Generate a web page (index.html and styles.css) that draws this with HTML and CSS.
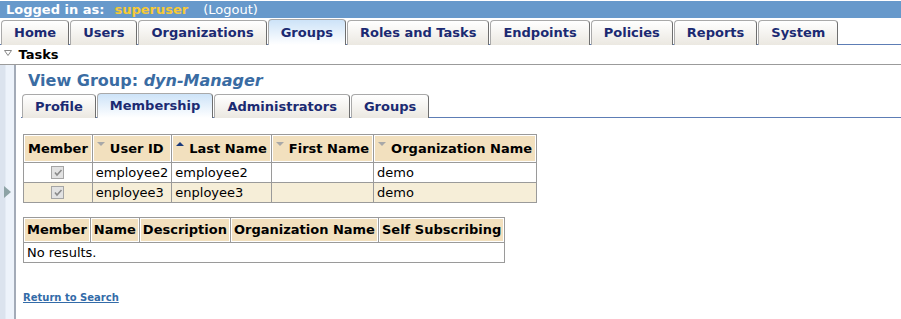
FILE: index.html
```html
<!DOCTYPE html>
<html lang="en">
<head>
    <meta charset="UTF-8">
    <title>View Group: dyn-Manager</title>
    <link rel="stylesheet" href="styles.css">
</head>
<body>

    <div class="topbar">
        <b>Logged in as:</b><span class="user">superuser</span><span class="logout">(Logout)</span>
    </div>

    <ul class="navtabs">
        <li>Home</li>
        <li>Users</li>
        <li>Organizations</li>
        <li class="active">Groups</li>
        <li>Roles and Tasks</li>
        <li>Endpoints</li>
        <li>Policies</li>
        <li>Reports</li>
        <li>System</li>
    </ul>

    <div class="tasks">
        <svg class="tasks-tri" width="8" height="6" viewBox="0 0 8 6"><path d="M0.5 0.5 H7.5 L4 5.5 Z" fill="#fff" stroke="#888"/></svg>
        Tasks
    </div>

    <div class="main">
        <div class="sidebar">
            <svg width="7" height="12" viewBox="0 0 7 12"><path d="M0 0 L7 6 L0 12 Z" fill="#8da3a6"/></svg>
        </div>

        <div class="content">
            <h2 class="title">View Group: <em>dyn-Manager</em></h2>

            <ul class="subtabs">
                <li>Profile</li>
                <li class="active">Membership</li>
                <li>Administrators</li>
                <li>Groups</li>
            </ul>

            <table class="grid sorted">
                <tr>
                    <th>Member</th>
                    <th><svg class="sort" width="8" height="5" viewBox="0 0 8 5"><path d="M0 0 H8 L4 4 Z" fill="#a8a8a8"/></svg>User ID</th>
                    <th><svg class="sort" width="8" height="5" viewBox="0 0 8 5"><path d="M0 4 H8 L4 0 Z" fill="#1b3a7a"/></svg>Last Name</th>
                    <th><svg class="sort" width="8" height="5" viewBox="0 0 8 5"><path d="M0 0 H8 L4 4 Z" fill="#a8a8a8"/></svg>First Name</th>
                    <th><svg class="sort" width="8" height="5" viewBox="0 0 8 5"><path d="M0 0 H8 L4 4 Z" fill="#a8a8a8"/></svg>Organization Name</th>
                </tr>
                <tr>
                    <td class="check"><span class="box"><svg width="10" height="10" viewBox="0 0 10 10"><path d="M2 4.5 L4 7 L8.5 2" fill="none" stroke="#8a8a8a" stroke-width="1.6"/></svg></span></td>
                    <td>employee2</td>
                    <td>employee2</td>
                    <td></td>
                    <td>demo</td>
                </tr>
                <tr class="alt">
                    <td class="check"><span class="box"><svg width="10" height="10" viewBox="0 0 10 10"><path d="M2 4.5 L4 7 L8.5 2" fill="none" stroke="#8a8a8a" stroke-width="1.6"/></svg></span></td>
                    <td>enployee3</td>
                    <td>enployee3</td>
                    <td></td>
                    <td>demo</td>
                </tr>
            </table>

            <table class="grid">
                <tr>
                    <th>Member</th>
                    <th>Name</th>
                    <th>Description</th>
                    <th>Organization Name</th>
                    <th>Self Subscribing</th>
                </tr>
                <tr>
                    <td colspan="5">No results.</td>
                </tr>
            </table>

            <a class="return" href="#">Return to Search</a>
        </div>
    </div>

</body>
</html>
```

FILE: styles.css
```css
html, body {
    height: 100%;
}

body {
    font-family: 'DejaVu Sans', Verdana, sans-serif;
    font-size: 13px;
    background-color: #fff;
    margin: 0;
    padding: 0;
    display: flex;
    flex-direction: column;
}

.topbar {
    background-color: #6799cb;
    color: #fff;
    height: 17px;
    line-height: 17px;
    margin-top: 1px;
    padding-left: 6px;
}

.topbar .user {
    color: #f9c934;
    font-weight: bold;
    margin-left: 10px;
}

.topbar .logout {
    margin-left: 15px;
}

/* main tabs */
.navtabs,
.subtabs {
    display: flex;
    align-items: flex-end;
    list-style: none;
    margin: 0;
    padding: 0;
}

.navtabs {
    height: 26px;
    padding-left: 1px;
    border-bottom: 1px solid #5d7db5;
}

.navtabs li,
.subtabs li {
    font-weight: bold;
    color: #1b2a72;
    background: linear-gradient(#ffffff, #ebe8e1);
    border: 1px solid #a9a9a9;
    border-right-color: #6e6e6e;
    border-bottom: none;
    border-radius: 4px 4px 0 0;
    margin-right: 1px;
    margin-bottom: -1px;
}

.navtabs li {
    height: 24px;
    line-height: 24px;
    padding: 0 12px;
}

.navtabs li.active,
.subtabs li.active {
    background: linear-gradient(#cde3f8, #ffffff);
}

.navtabs li.active {
    height: 25px;
    line-height: 26px;
}

.tasks {
    height: 19px;
    line-height: 19px;
    font-weight: bold;
    color: #000;
    padding-left: 4px;
    border-bottom: 1px solid #9b9b9b;
}

.tasks-tri {
    margin-right: 2px;
    vertical-align: 3px;
}

/* body */
.main {
    flex: 1;
    display: flex;
}

.sidebar {
    width: 16px;
    background: linear-gradient(to right, #dbe3ee 0, #dbe3ee 5px, #edf3fb 6px);
    border-right: 2px solid #a3abb8;
    display: flex;
    align-items: center;
    padding-left: 4px;
    box-sizing: border-box;
}

.content {
    flex: 1;
    padding-left: 7px;
}

.title {
    font-size: 16px;
    color: #3a6ca3;
    margin: 6px 0 0 5px;
    line-height: 20px;
}

.title em {
    font-style: italic;
}

.subtabs {
    margin-top: 2px;
    padding-left: 1px;
    margin-left: -2px;
    border-bottom: 1px solid #5d7db5;
}

.subtabs li {
    height: 23px;
    line-height: 23px;
    padding: 0 12px;
}

.subtabs li.active {
    height: 24px;
    line-height: 24px;
}

/* tables */
.grid {
    border-collapse: collapse;
    border: 1px solid #8c8c8c;
    margin-top: 16px;
}

.grid th {
    background-color: #f2e0be;
    border: 1px solid #9a9a9a;
    box-shadow: inset 0 0 0 1px #fff;
    text-align: left;
    white-space: nowrap;
    line-height: 16px;
    padding: 4px 3px;
}

.grid.sorted th {
    padding: 6px 4px 5px;
}

.grid td {
    border: 1px solid #9a9a9a;
    line-height: 15px;
    padding: 2px 3px;
    white-space: nowrap;
}

.grid tr.alt td {
    background-color: #f6eed8;
}

.grid td.check {
    text-align: center;
}

.box {
    display: inline-block;
    width: 11px;
    height: 11px;
    border: 1px solid #a5a5a5;
    background-color: #e2e2e2;
    vertical-align: -2px;
}

.box svg {
    display: block;
    margin: 1px 0 0 1px;
}

.sort {
    margin-right: 5px;
    vertical-align: 6px;
}

.grid.sorted + .grid {
    margin-top: 14px;
}

.return {
    display: inline-block;
    margin-top: 29px;
    font-size: 10px;
    font-weight: bold;
    color: #336ba8;
}
```
